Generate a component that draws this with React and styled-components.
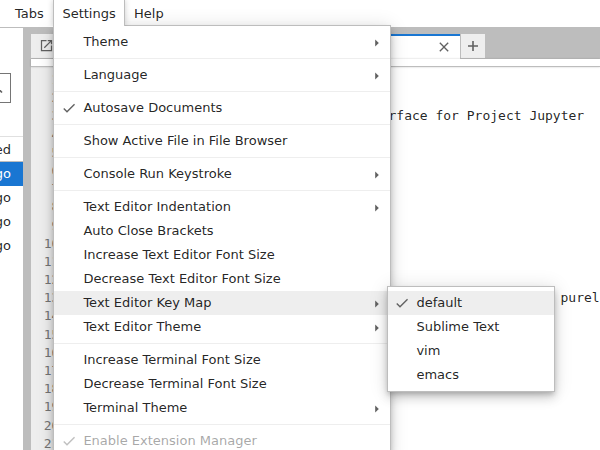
import React from 'react';
import styled, { createGlobalStyle } from 'styled-components';

const GlobalStyle = createGlobalStyle`
  * { box-sizing: border-box; }
  body {
    margin: 0;
    overflow: hidden;
    background: #fff;
    color: rgba(0, 0, 0, 0.87);
    font: 13px/24px "DejaVu Sans", sans-serif;
  }
`;

const Shell = styled.div`
  position: relative;
  display: flex;
  flex-direction: column;
  width: 600px;
  height: 450px;
  overflow: hidden;
  background: #fff;
`;

const MenuBar = styled.nav`
  display: flex;
  flex: none;
  height: 28px;
  padding-left: 6px;
  border-bottom: 1px solid #bdbdbd;
`;

const MenuBarItem = styled.div`
  height: 26px;
  width: ${(p) => p.$width}px;
  padding-left: 8px;
  line-height: 27px;
  border: 1px solid transparent;
  border-width: 0 1px;
  ${(p) =>
    p.$open &&
    `
    position: relative;
    z-index: 3;
    background: #fff;
    border-color: #bdbdbd;
    padding-left: 8.4px;
    box-shadow: 0 0 6px rgba(0, 0, 0, 0.2);
    clip-path: inset(0 -8px 0 -8px);
  `}
`;

const Workspace = styled.div`
  display: flex;
  flex: 1;
  min-height: 0;
`;

const Sidebar = styled.aside`
  display: flex;
  flex-direction: column;
  width: 23px;
  flex: none;
  overflow: hidden;
`;

const FilterBox = styled.div`
  display: flex;
  align-items: center;
  justify-content: flex-end;
  width: 11px;
  height: 30px;
  margin: 45px 0 33px;
  padding-right: 7px;
  border: 1px solid #757575;
  border-left: 0;
`;

const FileHeader = styled.div`
  display: flex;
  justify-content: flex-end;
  height: 26px;
  padding-right: 12px;
  border: 1px solid #bdbdbd;
  border-width: 1px 0;
  border-top-color: #e0e0e0;
  line-height: 25px;
  white-space: nowrap;
`;

const FileRow = styled.div`
  display: flex;
  justify-content: flex-end;
  height: 24px;
  padding-right: 12px;
  white-space: nowrap;
  color: ${(p) => (p.$selected ? '#fff' : 'inherit')};
  background: ${(p) => (p.$selected ? '#1976d2' : 'transparent')};
`;

const Dock = styled.main`
  display: flex;
  flex-direction: column;
  flex: 1;
  min-width: 0;
  border-left: 8px solid #bdbdbd;
`;

const TabStrip = styled.div`
  display: flex;
  flex: none;
  height: 31px;
  padding-top: 6px;
  background: #bdbdbd;
`;

const LauncherTab = styled.div`
  width: 160px;
  height: 24px;
  padding: 4px 7.5px;
  background: #eee;
`;

const ActiveTab = styled.div`
  display: flex;
  align-items: center;
  justify-content: flex-end;
  width: 269px;
  height: 25px;
  padding: 0 8px 1px 0;
  background: #fff;
  border-top: 2px solid #1976d2;
`;

const AddTab = styled.div`
  display: flex;
  align-items: center;
  justify-content: center;
  width: 24px;
  height: 24px;
  margin-left: 1px;
  background: #eee;
`;

const Toolbar = styled.div`
  position: relative;
  z-index: 1;
  flex: none;
  height: 8px;
  background: #fff;
  border-bottom: 1px solid #bdbdbd;
  box-shadow: 0 0 2px rgba(0, 0, 0, 0.24);
`;

const Editor = styled.div`
  display: flex;
  flex: 1;
  min-height: 0;
  overflow: hidden;
  font: 13px/18.2px "DejaVu Sans Mono", monospace;
`;

const Gutter = styled.div`
  flex: none;
  width: 33px;
  padding: 4px 4.6px 0 0;
  background: #eee;
  color: #757575;
  text-align: right;
`;

const Code = styled.div`
  flex: 1;
  min-width: 0;
  padding: 4px 0 0 4px;
`;

const Line = styled.div`
  height: 18.2px;
  padding-left: ${(p) => p.$indent || 0}px;
  white-space: pre;
`;

const MenuPanel = styled.div`
  position: absolute;
  z-index: ${(p) => p.$layer};
  left: ${(p) => p.$x}px;
  top: ${(p) => p.$y}px;
  width: ${(p) => p.$width}px;
  padding: 4px 0;
  background: #fff;
  border: 1px solid #bdbdbd;
  box-shadow: 0 3px 5px -1px rgba(0, 0, 0, 0.2), 0 6px 10px 0 rgba(0, 0, 0, 0.14),
    0 1px 18px 0 rgba(0, 0, 0, 0.12);
`;

const MenuRow = styled.div`
  display: grid;
  grid-template-columns: 22px 1fr 10px;
  align-items: center;
  height: 24px;
  padding: 0 8px 0 7px;
  white-space: nowrap;
  background: ${(p) => (p.$active ? '#eee' : 'transparent')};
  opacity: ${(p) => (p.$disabled ? 0.4 : 1)};
`;

const Label = styled.span`
  margin-left: ${(p) => (p.$nested ? -0.6 : 0.4)}px;
`;

const Separator = styled.div`
  height: 1px;
  margin: 4px 0;
  background: #eee;
`;

const Icon = styled.svg`
  display: block;
  flex: none;
  overflow: visible;
`;

const CheckSlot = styled.span`
  margin-left: ${(p) => (p.$nested ? -1 : 0)}px;
`;

const Check = () => (
  <Icon width="16" height="16" viewBox="0 0 24 24" fill="#616161">
    <path d="M9 16.17L4.83 12l-1.42 1.41L9 19 21 7l-1.41-1.41z" />
  </Icon>
);

const Caret = () => (
  <Icon width="10" height="10" viewBox="0 0 10 10" fill="#616161">
    <path d="M3.2 2.6v6.8L6.8 6z" />
  </Icon>
);

const settings = [
  { label: 'Theme', sub: true },
  null,
  { label: 'Language', sub: true },
  null,
  { label: 'Autosave Documents', checked: true },
  null,
  { label: 'Show Active File in File Browser' },
  null,
  { label: 'Console Run Keystroke', sub: true },
  null,
  { label: 'Text Editor Indentation', sub: true },
  { label: 'Auto Close Brackets' },
  { label: 'Increase Text Editor Font Size' },
  { label: 'Decrease Text Editor Font Size' },
  { label: 'Text Editor Key Map', sub: true, active: true },
  { label: 'Text Editor Theme', sub: true },
  null,
  { label: 'Increase Terminal Font Size' },
  { label: 'Decrease Terminal Font Size' },
  { label: 'Terminal Theme', sub: true },
  null,
  { label: 'Enable Extension Manager', checked: true, disabled: true },
];

const keyMaps = [
  { label: 'default', checked: true, active: true },
  { label: 'Sublime Text' },
  { label: 'vim' },
  { label: 'emacs' },
];

const Menu = ({ items, x, y, width, layer, nested }) => (
  <MenuPanel $x={x} $y={y} $width={width} $layer={layer}>
    {items.map((item, i) =>
      item ? (
        <MenuRow key={i} $active={item.active} $disabled={item.disabled}>
          <CheckSlot $nested={nested}>{item.checked && <Check />}</CheckSlot>
          <Label $nested={nested}>{item.label}</Label>
          {item.sub && <Caret />}
        </MenuRow>
      ) : (
        <Separator key={i} />
      )
    )}
  </MenuPanel>
);

const lineNumbers = Array.from({ length: 21 }, (_, i) => i + 1);
const code = {
  3: { text: 'rface for Project Jupyter', indent: 320.5 },
  13: { text: 'purel', indent: 492.5 },
};

export default function App() {
  return (
    <Shell>
      <GlobalStyle />
      <MenuBar>
        <MenuBarItem $width={47}>Tabs</MenuBarItem>
        <MenuBarItem $width={72} $open>Settings</MenuBarItem>
        <MenuBarItem $width={50}>Help</MenuBarItem>
      </MenuBar>
      <Workspace>
        <Sidebar>
          <FilterBox>
            <Icon width="12" height="12" viewBox="0 0 12 12" fill="none" stroke="#616161" strokeWidth="1.6">
              <circle cx="4.5" cy="4" r="3.5" />
              <path d="M7 6.5L11 10.5" />
            </Icon>
          </FilterBox>
          <FileHeader>ed</FileHeader>
          <FileRow $selected>go</FileRow>
          <FileRow>go</FileRow>
          <FileRow>go</FileRow>
          <FileRow>go</FileRow>
        </Sidebar>
        <Dock>
          <TabStrip>
            <LauncherTab>
              <Icon width="15" height="15" viewBox="0 0 24 24" fill="#616161">
                <path d="M19 19H5V5h7V3H3v18h18v-9h-2v7zM14 3v2h3.59l-9.83 9.83 1.41 1.41L19 6.41V10h2V3h-7z" />
              </Icon>
            </LauncherTab>
            <ActiveTab>
              <Icon width="16" height="16" viewBox="0 0 24 24" fill="#616161">
                <path d="M19 6.41L17.59 5 12 10.59 6.41 5 5 6.41 10.59 12 5 17.59 6.41 19 12 13.41 17.59 19 19 17.59 13.41 12z" />
              </Icon>
            </ActiveTab>
            <AddTab>
              <Icon width="16" height="16" viewBox="0 0 24 24" fill="#616161">
                <path d="M19.5 13.2h-6.3v6.3h-2.4v-6.3H4.5v-2.4h6.3V4.5h2.4v6.3h6.3z" />
              </Icon>
            </AddTab>
          </TabStrip>
          <Toolbar />
          <Editor>
            <Gutter>
              {lineNumbers.map((n) => (
                <Line key={n}>{n}</Line>
              ))}
            </Gutter>
            <Code>
              {lineNumbers.map((n) => (
                <Line key={n} $indent={code[n]?.indent}>{code[n]?.text}</Line>
              ))}
            </Code>
          </Editor>
        </Dock>
      </Workspace>
      <Menu items={settings} x={53} y={25} width={338} layer={2} />
      <Menu items={keyMaps} x={387} y={286} width={168} layer={4} nested />
    </Shell>
  );
}
